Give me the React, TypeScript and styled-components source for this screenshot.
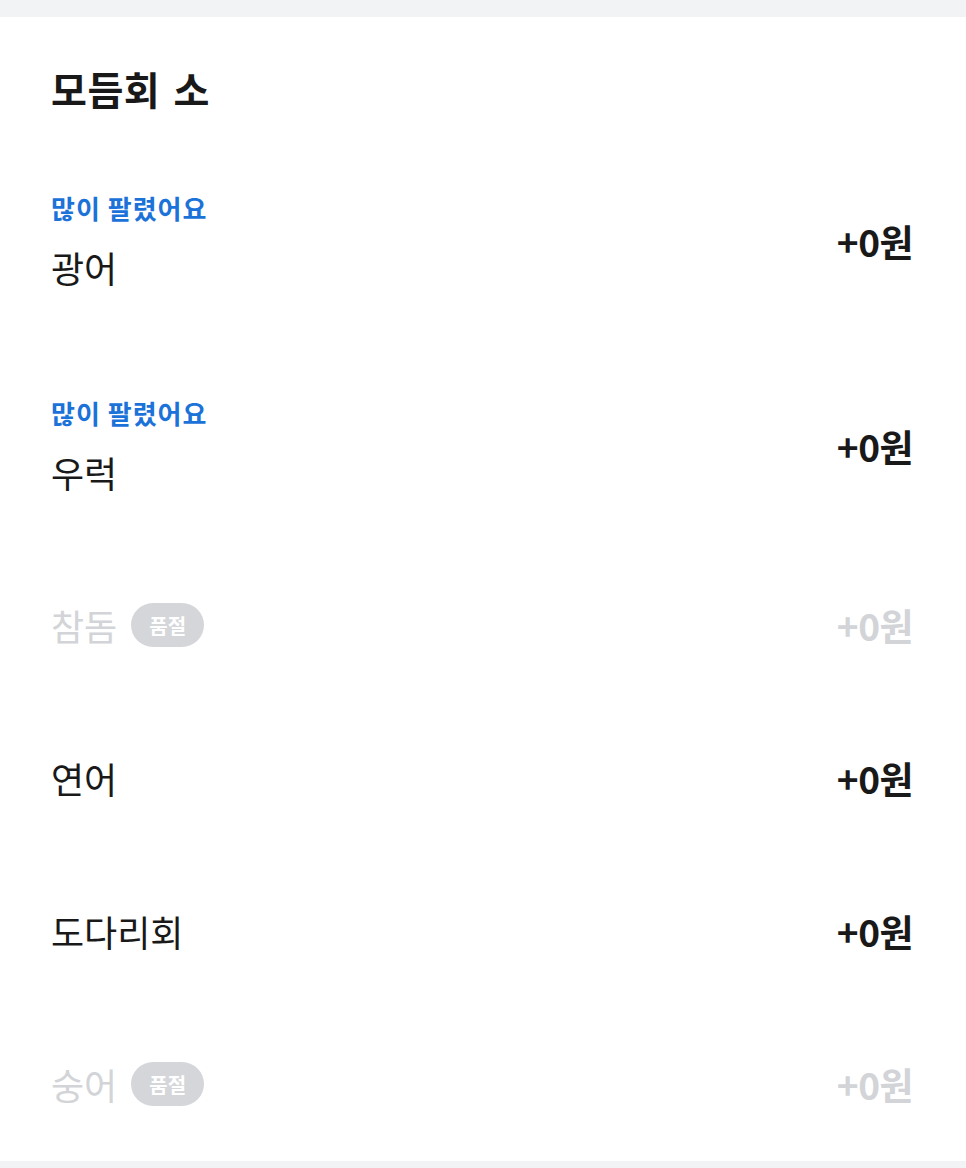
import styled, { createGlobalStyle } from 'styled-components';

const GlobalStyle = createGlobalStyle`
  html, body {
    margin: 0;
    padding: 0;
    background: #f2f3f5;
  }
  body {
    font-family: "Noto Sans CJK KR", "Noto Sans", sans-serif;
    -webkit-font-smoothing: antialiased;
  }
`;

type Item = {
  name: string;
  price: string;
  popular?: boolean;
  soldOut?: boolean;
};

const items: Item[] = [
  { name: '광어', price: '+0원', popular: true },
  { name: '우럭', price: '+0원', popular: true },
  { name: '참돔', price: '+0원', soldOut: true },
  { name: '연어', price: '+0원' },
  { name: '도다리회', price: '+0원' },
  { name: '숭어', price: '+0원', soldOut: true },
];

function App() {
  return (
    <>
      <GlobalStyle />
      <Page>
        <Section>
          <Title>모듬회 소</Title>
          <List>
            {items.map((item) => (
              <Row key={item.name}>
                <Info>
                  {item.popular && <Label>많이 팔렸어요</Label>}
                  <NameLine>
                    <Name $disabled={item.soldOut}>{item.name}</Name>
                    {item.soldOut && <Badge>품절</Badge>}
                  </NameLine>
                </Info>
                <Price $disabled={item.soldOut}>{item.price}</Price>
              </Row>
            ))}
          </List>
        </Section>
      </Page>
    </>
  );
}

const Page = styled.div`
  padding: 17px 0 8px;
  background: #f2f3f5;
`;

const Section = styled.section`
  background: #ffffff;
  padding: 46px 53px 0 51px;
`;

const Title = styled.h2`
  margin: 0 0 26px;
  font-size: 39px;
  line-height: 50px;
  font-weight: 700;
  color: #191919;
  letter-spacing: 0.5px;
  word-spacing: 4px;
`;

const List = styled.div`
  display: flex;
  flex-direction: column;
`;

const Row = styled.div`
  display: flex;
  align-items: center;
  justify-content: space-between;
  padding: 51px 0 52px;
`;

const Info = styled.div`
  display: flex;
  flex-direction: column;
`;

const Label = styled.span`
  font-size: 26px;
  line-height: 36px;
  font-weight: 700;
  color: #1b72d8;
  margin-bottom: 16px;
  letter-spacing: 1px;
`;

const NameLine = styled.div`
  display: flex;
  align-items: center;
  gap: 14px;
`;

const Name = styled.span<{ $disabled?: boolean }>`
  font-size: 36px;
  line-height: 50px;
  font-weight: 400;
  color: ${(p) => (p.$disabled ? '#d2d4d7' : '#191919')};
  letter-spacing: 0;
`;

const Badge = styled.span`
  display: inline-flex;
  align-items: center;
  justify-content: center;
  height: 44px;
  padding: 0 18px;
  border-radius: 22px;
  background: #d4d6d9;
  color: #ffffff;
  font-size: 20px;
  font-weight: 700;
`;

const Price = styled.span<{ $disabled?: boolean }>`
  font-size: 37px;
  line-height: 50px;
  font-weight: 700;
  color: ${(p) => (p.$disabled ? '#d2d4d7' : '#191919')};
  letter-spacing: -0.5px;
`;

export default App;
